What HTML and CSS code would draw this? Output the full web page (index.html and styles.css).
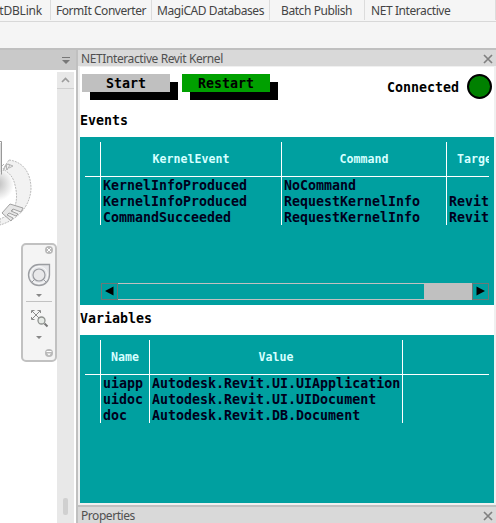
FILE: index.html
```html
<!DOCTYPE html>
<html lang="en">
<head>
<meta charset="utf-8">
<title>NETInteractive Revit Kernel</title>
<link rel="stylesheet" href="styles.css">
</head>
<body>
<nav class="tabs">
  <span class="tab tab-db"><b class="t-db">itDBLink</b></span>
  <span class="tab tab-formit"><b class="t-formit">FormIt Converter</b></span>
  <span class="tab tab-magi"><b class="t-magi">MagiCAD Databases</b></span>
  <span class="tab tab-batch"><b class="t-batch">Batch Publish</b></span>
  <span class="tab tab-net"><b class="t-net">NET Interactive</b></span>
</nav>
<div class="ribbon"></div>
<main class="workspace">
  <section class="view">
    <div class="view-bar">
      <svg width="10" height="8" viewBox="0 0 10 8"><path d="M1 .5h8" stroke="#777"/><path d="M1 3h8L5 7z" fill="#777"/></svg>
    </div>
    <div class="view-body">
      <div class="canvas">
        <svg class="scene" width="57" height="453" viewBox="0 0 57 453">
          <defs><radialGradient id="shade"><stop offset="0" stop-color="#bbb"/><stop offset="1" stop-color="#fff"/></radialGradient></defs>
          <circle cx="-3" cy="114" r="17" fill="url(#shade)"/>
          <path d="M9 90C25 92 31 105 31 119C30 137 17 150 0 155V149L9 145C17 137 18 127 15 115C13 106 9 103 3 99Z" fill="#f2f2f2" stroke="#bbb" stroke-dasharray="2 1"/>
          <path d="M0 71.500h1.500v33" fill="none" stroke="#999"/>
          <path d="M0 73h1v29H0z" fill="#ddd"/>
          <path d="M2 96l2-2M3 101l3-6 1 5 3-5-4-1 1 6M8 94l5 2-4 2" fill="none" stroke="#b5b5b5"/>
          <path d="M2 143l8-9 13 4-2 4-8-3-2 2 7 3-2 2-7-3-2 2 6 3-2 3z" fill="#e6e6e6" stroke="#a2a2a2"/>
        </svg>
        <svg class="navbar" width="36" height="119" viewBox="0 0 36 119">
          <rect x="1" y="1" width="34" height="117" rx="4" fill="#f4f4f4" stroke="#c1c1c1" stroke-width="2"/>
          <circle cx="28" cy="7" r="4" fill="#b9b9b9"/><path d="M26 5l4 4m0-4l-4 4" stroke="#fff" stroke-width="1"/>
          <path d="M18 21.500h10.500V32A10.500 10.500 0 1 1 18 21.500z" fill="#e5e6e9" stroke="#9b9da1" stroke-width="1.300"/>
          <circle cx="18" cy="32" r="8.500" fill="none" stroke="#fafafa"/>
          <circle cx="18" cy="32" r="6" fill="#e8e8ea" stroke="#999ba0" stroke-width="1.200"/>
          <path d="M13.500 36.500l-3 3m12-3l3 3" stroke="#999ba0"/>
          <path d="M15 51h6l-3 3zM15 93h6l-3 3z" fill="#888"/>
          <path d="M5 58.500h26" stroke="#c2c2c2"/>
          <path d="M11 68l8 8m0-8l-8 8M10.500 70v-2.500h3m3 0h3V70M10.500 74v2.500h3" fill="none" stroke="#8b8b8b"/>
          <path d="M23.500 80.500l3 3" stroke="#777" stroke-width="2"/>
          <circle cx="20.500" cy="77.500" r="3.500" fill="#e6eae6" stroke="#8f928f" stroke-width="1.300"/>
          <circle cx="28" cy="110" r="4" fill="#b9b9b9"/><path d="M25.500 108.500h5" stroke="#fff"/><path d="M26 110.500h4l-2 2z" fill="#fff"/>
        </svg>
      </div>
      <div class="vscroll">
        <div class="up"><svg width="9" height="6" viewBox="0 0 9 6"><path d="M1 5l3.500-3.500L8 5" fill="none" stroke="#9c9c9c" stroke-width="1.700"/></svg></div>
        <div class="grip"></div>
      </div>
    </div>
  </section>
  <section class="dock">
    <header class="caption"><b class="t-kernel">NETInteractive Revit Kernel</b>
      <svg class="close" width="10" height="10" viewBox="0 0 10 10"><path d="M1 1l8 8m0-8L1 9" stroke="#808080" stroke-width="1.700"/></svg>
    </header>
    <div class="panel">
      <div class="toolbar">
        <button class="btn">Start</button>
        <button class="btn go">Restart</button>
        <span class="status">Connected</span>
        <span class="lamp"></span>
      </div>
      <h2 class="title">Events</h2>
      <div class="box">
        <div class="grid events">
          <div class="th"></div><div class="th">KernelEvent</div><div class="th">Command</div><div class="th cut">Target</div>
          <div></div><div>KernelInfoProduced</div><div>NoCommand</div><div></div>
          <div></div><div>KernelInfoProduced</div><div>RequestKernelInfo</div><div>Revit</div>
          <div></div><div>CommandSucceeded</div><div>RequestKernelInfo</div><div>Revit</div>
        </div>
        <div class="hscroll">
          <span class="arrow"><svg width="15" height="15" viewBox="0 0 15 15"><path d="M3 7L11.500 2.500v9z"/></svg></span>
          <span class="track"></span><span class="thumb"></span>
          <span class="arrow"><svg width="15" height="15" viewBox="0 0 15 15"><path d="M12 7L3.500 2.500v9z"/></svg></span>
        </div>
      </div>
      <h2 class="title second">Variables</h2>
      <div class="box">
        <div class="grid vars">
          <div class="th"></div><div class="th">Name</div><div class="th">Value</div><div class="th"></div>
          <div></div><div>uiapp</div><div>Autodesk.Revit.UI.UIApplication</div><div></div>
          <div></div><div>uidoc</div><div>Autodesk.Revit.UI.UIDocument</div><div></div>
          <div></div><div>doc</div><div>Autodesk.Revit.DB.Document</div><div></div>
        </div>
      </div>
    </div>
    <header class="caption bottom"><b class="t-props">Properties</b>
      <svg class="close" width="10" height="10" viewBox="0 0 10 10"><path d="M1 1l8 8m0-8L1 9" stroke="#808080" stroke-width="1.700"/></svg>
    </header>
  </section>
</main>
</body>
</html>
```
FILE: styles.css
```css
* { box-sizing: border-box; }
body { margin: 0; width: 496px; height: 523px; overflow: hidden; background: #fff; font: 12px/16px "Noto Sans", "Open Sans", sans-serif; color: #444; }
b { font-weight: 400; white-space: nowrap; }
svg { display: block; }
.tabs { display: flex; height: 22px; background: #f5f5f5; border-bottom: 1px solid #d8d8d8; }
.tab { height: 20px; padding-top: 3px; border-right: 1px solid #dcdcdc; flex: none; overflow: hidden; }
.tab-db { width: 51px; display: flex; justify-content: flex-end; padding-right: 8px; }
.tab-formit { width: 101px; padding-left: 5px; }
.tab-magi { width: 118px; padding-left: 5px; }
.tab-batch { width: 95px; padding-left: 11px; }
.tab-net { width: 131px; padding-left: 6px; }
.t-db { letter-spacing: -.2px; }
.t-formit { letter-spacing: -.46px; }
.t-magi, .t-batch, .t-net { letter-spacing: -.42px; }
.t-kernel { letter-spacing: -.4px; }
.t-props { letter-spacing: -.45px; }
.ribbon { height: 28px; background: #f5f5f5; border-bottom: 2px solid #c0c0c0; }
.workspace { display: flex; height: 473px; }
.view { width: 76px; display: flex; flex-direction: column; }
.view-bar { height: 20px; background: #c9c9c9; padding: 7px 0 0 61px; }
.view-body { display: flex; flex: 1; }
.canvas { position: relative; width: 57px; }
.navbar { position: absolute; left: 21px; top: 173px; z-index: 1; }
.vscroll { width: 17px; margin-top: 2px; background: #e8e8e8; display: flex; flex-direction: column; }
.up { height: 17px; padding: 5px 0 0 4px; border-bottom: 1px solid #d0d0d0; }
.grip { width: 5px; height: 17px; margin: auto 0 8px 6px; background: #d0d0d0; border-radius: 2px; }
.dock { width: 420px; border-left: 2px solid #c0c0c0; background: #f0f0f0; }
.caption { height: 16px; background: #d9d9d9; display: flex; justify-content: space-between; align-items: center; padding: 2px 3px 0; color: #505050; }
.bottom { height: 18px; margin-top: 2px; border-top: 2px solid #c0c0c0; }
.panel { margin: 1px 2px 0; height: 436px; background: #fff; font: bold 13.3px/16px "DejaVu Sans Mono", "Liberation Mono", monospace; color: #000; }
.toolbar { display: flex; height: 42px; padding: 7px 0 0 2px; }
.btn { width: 88px; height: 18px; margin-right: 12px; padding: 2px 0 0; border: 0; background: #c0c0c0; box-shadow: 8px 8px #000; color: #000; font: inherit; line-height: 16px; }
.go { background: #00a000; }
.status { margin: 6px 8px 0 auto; }
.lamp { width: 25px; height: 25px; margin-right: 2px; border: 2px solid #000; border-radius: 50%; background: #008000; }
.title { margin: 0; height: 28px; padding-top: 4px; font: inherit; }
.second { height: 30px; padding-top: 6px; }
.box { height: 168px; padding: 5px; background: #00a0a0; }
.grid { display: grid; grid-template-rows: 35px repeat(3, 16px); color: #00001c; }
.events { grid-template-columns: 15px 181px 165px 43px; }
.vars { grid-template-columns: 15px 49px 253px 87px; }
.grid > div { padding-left: 2px; line-height: 18px; white-space: nowrap; overflow: hidden; }
.grid > div:not(:nth-child(4n + 1)) { border-left: 1px solid #fff; }
.grid > .th { border-bottom: 1px solid #fff; padding: 0; font-size: 11.6px; line-height: 35px; text-align: center; color: #d5ffff; }
.grid > .cut { padding-left: 10px; text-align: left; }
.hscroll { display: flex; height: 17px; margin: 58px 0 0 16px; }
.arrow { width: 17px; border: 1px solid #6c7878; }
.track { flex: 1; border: solid #c0c0c0; border-width: 1px 0; }
.thumb { width: 48px; background: #c0c0c0; }
```
